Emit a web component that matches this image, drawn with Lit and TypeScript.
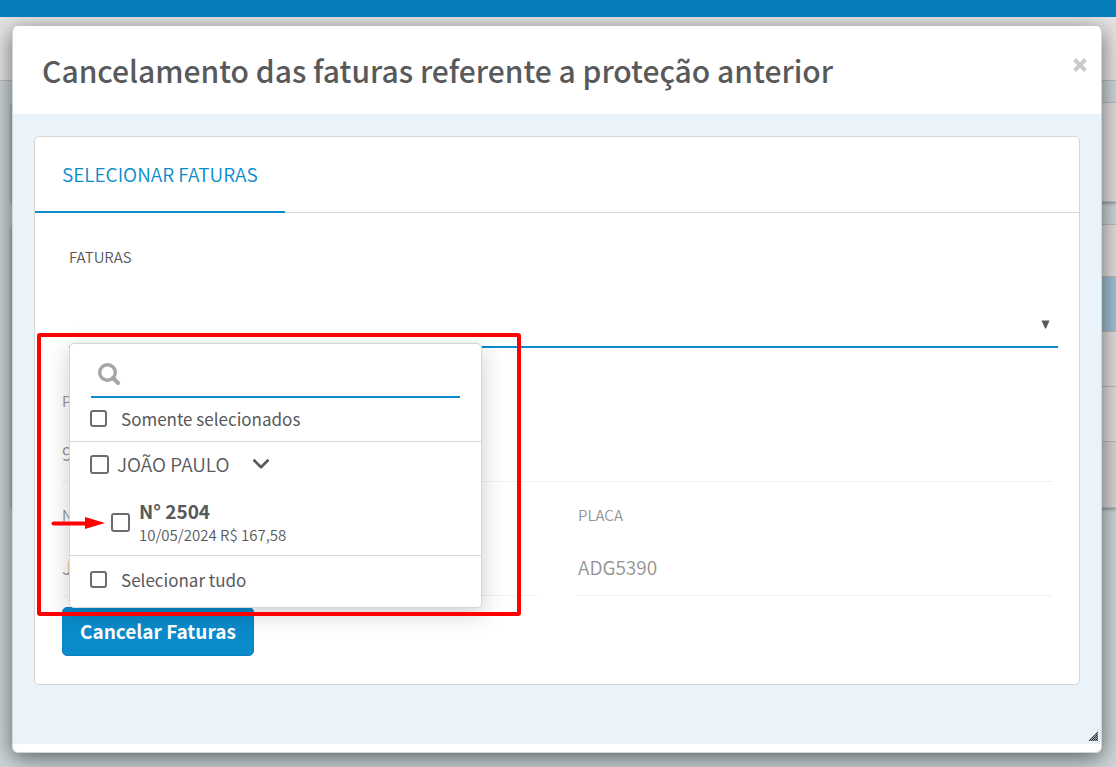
import { LitElement, html, css } from "lit";
import { customElement } from "lit/decorators.js";

@customElement("page-backdrop")
class PageBackdrop extends LitElement {
  static styles = css`
    :host {
      display: block;
      min-height: 100vh;
      background: #ccd5d8;
    }
    .topbar {
      position: relative;
      z-index: 2;
      height: 17px;
      background: #067cba;
    }
    .subbar {
      height: 63px;
      background: #e3e3e3;
      border-bottom: 1px solid #bbb;
    }
    .cards {
      display: flex;
      flex-direction: column;
      gap: 22px;
      padding: 21px 0 0 11px;
    }
    .card {
      background: #dedede;
      border: 1px solid #bbb;
      border-right: 0;
      box-shadow: 0 2px 3px rgba(0, 0, 0, 0.25);
      border-radius: 4px 0 0 4px;
    }
    .summary {
      height: 98px;
    }
    .row {
      height: 54px;
      border-bottom: 1px solid #bbb;
    }
    .head {
      height: 51px;
    }
    .current {
      background: #9fc0d2;
    }
    .last {
      height: 65px;
      background: #d6d6d6;
      border-bottom: 0;
    }
  `;

  render() {
    return html`
      <div class="topbar"></div>
      <div class="subbar"></div>
      <div class="cards">
        <div class="card summary"></div>
        <div class="card">
          <div class="row head"></div>
          <div class="row current"></div>
          <div class="row"></div>
          <div class="row"></div>
          <div class="row last"></div>
        </div>
      </div>
    `;
  }
}

@customElement("invoice-picker")
class InvoicePicker extends LitElement {
  static styles = css`
    :host {
      display: block;
      box-sizing: border-box;
      background: #fff;
      border: 1px solid #d6d6d6;
      border-radius: 5px;
      box-shadow: 0 6px 24px rgba(0, 0, 0, 0.2);
      color: #58595b;
      font-size: 17px;
      line-height: 24px;
    }
    .search {
      display: grid;
      align-items: center;
      margin: 0 21px;
      border-bottom: 2px solid #0a8bcb;
    }
    .search > * {
      grid-area: 1 / 1;
    }
    .search svg {
      width: 24px;
      height: 24px;
      margin: 8px 0 0 6px;
    }
    .search input {
      box-sizing: border-box;
      width: 100%;
      height: 52px;
      padding: 8px 0 0 40px;
      border: 0;
      outline: 0;
      background: none;
      font: inherit;
      color: inherit;
    }
    .option {
      display: flex;
      align-items: center;
      box-sizing: border-box;
      height: 43px;
      padding: 0 21px 2px 20px;
      gap: 14px;
    }
    .all {
      height: 51px;
      padding-bottom: 4px;
    }
    label {
      cursor: pointer;
    }
    .group {
      display: flex;
      align-items: center;
      box-sizing: border-box;
      gap: 8px;
      height: 46px;
      padding: 0 20px 2px;
      font-size: 19px;
      font-weight: 350;
    }
    .groups {
      border-top: 1px solid #d6d6d6;
      border-bottom: 1px solid #d6d6d6;
      padding-bottom: 9px;
    }
    .invoice {
      display: flex;
      align-items: center;
      gap: 9px;
      padding: 11px 21px 0 41px;
    }
    .details {
      display: grid;
    }
    .number {
      font-size: 19px;
      font-weight: 700;
    }
    .meta {
      font-size: 15px;
      font-weight: 350;
      line-height: 23px;
    }
    input[type="checkbox"] {
      appearance: none;
      flex: none;
      box-sizing: border-box;
      width: 17px;
      height: 17px;
      margin: 0;
      border: 2px solid #6b6c6e;
      border-radius: 3px;
      background: #fff;
    }
    input.large {
      width: 19px;
      height: 19px;
    }
    input[type="checkbox"]:checked {
      background: #0a8bcb;
    }
    .toggle {
      display: flex;
      margin-left: 14px;
      padding: 0;
      border: 0;
      background: none;
    }
  `;

  render() {
    return html`
      <div class="search">
        <svg viewBox="0 0 24 24" fill="none" stroke="#a8a4a8" aria-hidden="true">
          <circle cx="10.5" cy="10.5" r="7.8" stroke-width="3.4" />
          <path d="M16 16l5 5" stroke-width="4" stroke-linecap="round" />
        </svg>
        <input type="text" aria-label="Pesquisar" />
      </div>
      <div class="option">
        <input type="checkbox" id="only" />
        <label for="only">Somente selecionados</label>
      </div>
      <div class="groups">
        <div class="group">
          <input class="large" type="checkbox" id="group" />
          <label for="group">JOÃO PAULO</label>
          <button class="toggle" type="button" aria-label="Recolher" aria-expanded="true">
            <svg width="18" height="12" viewBox="0 0 18 12" fill="none" stroke="#58595b" stroke-width="2.6">
              <path d="M1.5 1.8L9 9.2l7.5-7.4" stroke-linejoin="round" />
            </svg>
          </button>
        </div>
        <div class="invoice">
          <input class="large" type="checkbox" id="invoice" />
          <label class="details" for="invoice">
            <span class="number">N° 2504</span>
            <span class="meta">10/05/2024 R$ 167,58</span>
          </label>
        </div>
      </div>
      <div class="option all">
        <input type="checkbox" id="all" />
        <label for="all">Selecionar tudo</label>
      </div>
    `;
  }
}

@customElement("app-root")
class AppRoot extends LitElement {
  static styles = css`
    :host {
      display: block;
      position: relative;
      min-height: 100vh;
      overflow: hidden;
      font-family: "Noto Sans CJK SC", "Noto Sans", sans-serif;
      color: #58595b;
    }
    .modal {
      position: absolute;
      z-index: 1;
      top: 26px;
      left: 12px;
      right: 14px;
      box-sizing: border-box;
      background: #fff;
      border: 1px solid #d2d6d8;
      border-top-color: #fff;
      border-radius: 6px;
      box-shadow: 0 5px 22px rgba(0, 0, 0, 0.55);
    }
    .header {
      display: flex;
      justify-content: space-between;
      height: 87px;
      padding: 0 12px 0 29px;
    }
    h1 {
      margin: 0;
      font-size: 30px;
      font-weight: 500;
      line-height: 87px;
    }
    .close {
      display: flex;
      align-self: flex-start;
      margin-top: 29px;
      padding: 0;
      border: 0;
      background: none;
    }
    .body {
      position: relative;
      padding: 22px 21px 59px;
      margin-bottom: 8px;
      background: #eaf3fa;
    }
    .grip {
      position: absolute;
      right: 3px;
      bottom: 3px;
    }
    .card {
      background: #fff;
      border: 1px solid #d6d6d6;
      border-radius: 5px;
    }
    .tabs {
      display: flex;
      border-bottom: 1px solid #d6d6d6;
    }
    .tab {
      height: 76px;
      margin-bottom: -1px;
      padding: 0 27px 2px;
      border: 0;
      border-bottom: 2px solid #0a8bcb;
      background: none;
      color: #0a8bcb;
      font: inherit;
      font-size: 19px;
      font-weight: 350;
    }
    form {
      display: flex;
      flex-direction: column;
      align-items: stretch;
      padding: 32px 21px 28px 27px;
    }
    .picker {
      position: relative;
      display: grid;
      padding-left: 7px;
    }
    .caption {
      font-size: 15px;
      font-weight: 350;
      line-height: 24px;
    }
    .picker .caption {
      margin-bottom: 31px;
    }
    .picker select {
      grid-area: 2 / 1;
      appearance: none;
      width: 100%;
      height: 48px;
      border: 0;
      border-bottom: 2px solid #0a8bcb;
      border-radius: 0;
      background: none;
      font: inherit;
    }
    .caret {
      grid-area: 2 / 1;
      place-self: center end;
      margin-right: 8px;
      pointer-events: none;
    }
    invoice-picker {
      position: absolute;
      z-index: 1;
      top: calc(100% - 5px);
      left: 7px;
      width: 413px;
    }
    .fields {
      display: grid;
      grid-template-columns: 1fr 1fr;
      column-gap: 41px;
      margin: 20px 5px 11px 0;
      color: #939393;
    }
    .field {
      display: grid;
      gap: 12px;
      padding-top: 21px;
      border-bottom: 1px solid #f1f1f1;
    }
    .wide {
      grid-column: 1 / -1;
    }
    .field input {
      box-sizing: border-box;
      width: 100%;
      height: 56px;
      padding: 0 0 2px;
      border: 0;
      outline: 0;
      background: none;
      color: inherit;
      font: inherit;
      font-size: 19px;
      font-weight: 350;
    }
    .submit {
      align-self: flex-start;
      height: 49px;
      padding: 0 17px 2px;
      border: 1px solid #0a80c0;
      border-radius: 5px;
      background: #0a8bcb;
      color: #fff;
      font: inherit;
      font-size: 19px;
      font-weight: 700;
    }
    .marks {
      position: absolute;
      z-index: 2;
      top: 333px;
      left: 37px;
      pointer-events: none;
    }
  `;

  render() {
    return html`
      <page-backdrop></page-backdrop>
      <section class="modal" role="dialog" aria-labelledby="title">
        <header class="header">
          <h1 id="title">Cancelamento das faturas referente a proteção anterior</h1>
          <button class="close" type="button" aria-label="Fechar">
            <svg width="18" height="18" viewBox="0 0 18 18" stroke="#cbcbcb" stroke-width="4">
              <path d="M3.500 3.500l11 11M14.500 3.500l-11 11" />
            </svg>
          </button>
        </header>
        <div class="body">
          <div class="card">
            <div class="tabs" role="tablist">
              <button class="tab" type="button" role="tab" aria-selected="true">SELECIONAR FATURAS</button>
            </div>
            <form>
              <div class="picker">
                <label class="caption" for="invoices">FATURAS</label>
                <select id="invoices"><option></option></select>
                <svg class="caret" width="9" height="9" viewBox="0 0 9 9" fill="#58595b" aria-hidden="true">
                  <path d="M0.500 0.500h8L5 8.500H4z" />
                </svg>
                <invoice-picker></invoice-picker>
              </div>
              <div class="fields">
                <div class="field wide">
                  <label class="caption" for="p">P</label>
                  <input id="p" readonly value="9" />
                </div>
                <div class="field">
                  <label class="caption" for="n">N</label>
                  <input id="n" readonly value="J" />
                </div>
                <div class="field">
                  <label class="caption" for="plate">PLACA</label>
                  <input id="plate" readonly value="ADG5390" />
                </div>
              </div>
              <button class="submit" type="button">Cancelar Faturas</button>
            </form>
          </div>
          <svg class="grip" width="10" height="10" viewBox="0 0 10 10" aria-hidden="true">
            <defs>
              <pattern id="dots" width="2" height="2" patternUnits="userSpaceOnUse">
                <rect width="2" height="2" fill="#a9a9a9" />
                <rect width="1" height="1" fill="#222" />
                <rect x="1" y="1" width="1" height="1" fill="#444" />
              </pattern>
            </defs>
            <path d="M10 0v10H0z" fill="url(#dots)" />
          </svg>
        </div>
      </section>
      <svg class="marks" width="485" height="283" viewBox="0 0 485 283" aria-hidden="true">
        <rect x="2" y="2" width="480" height="279" rx="1" fill="none" stroke="#f00" stroke-width="4" />
        <path d="M16.500 190.500h34" stroke="#f00" stroke-width="4" stroke-linecap="round" />
        <path d="M48 184l20 6-20 6z" fill="#f00" />
      </svg>
    `;
  }
}
